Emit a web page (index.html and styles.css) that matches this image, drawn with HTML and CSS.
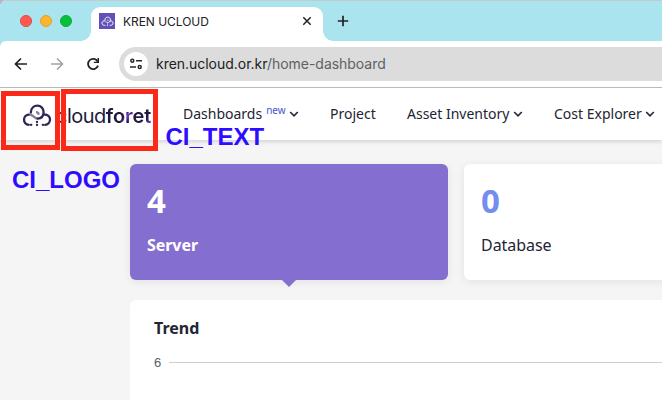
FILE: index.html
```html
<!DOCTYPE html>
<html lang="en">
<head>
<meta charset="utf-8">
<title>KREN UCLOUD</title>
<link rel="stylesheet" href="styles.css">
</head>
<body>
<svg class="symbols" aria-hidden="true">
  <symbol id="cloud" viewBox="0 0 30 24">
    <path d="M6.500 10.700C11 9.700 11.800 14.300 15.600 14.600M14 8.200c1.400 0 2.600.9 2.600 2.600" fill="none" stroke="var(--soft)" stroke-width="2.300"/>
    <path d="M6.800 20.800C.6 20.600.4 11.300 6.500 10.700M8.800 8.600C9.200-.8 21.700-.4 21.600 8.200c0 4-2.600 6.200-6 6.400M22 10.500c7.600-.5 8 9.600 1.200 10.300" fill="none" stroke="var(--ink)" stroke-width="2.300" stroke-linecap="round"/>
    <path d="M8.900 20.800h.4M20.800 20.800h.4M15 17.800v.2M15 20.900v.1" fill="none" stroke="var(--ink)" stroke-width="2.300" stroke-linecap="round"/>
  </symbol>
  <symbol id="chevron" viewBox="0 0 10 8"><path d="M1.200 2 5 5.800 8.800 2" fill="none" stroke="currentColor" stroke-width="1.600"/></symbol>
</svg>
<div class="window">
  <header class="tabstrip">
    <div class="lights"><i class="red"></i><i class="yellow"></i><i class="green"></i></div>
    <div class="tab">
      <span class="favicon"><svg viewBox="0 0 30 24"><use href="#cloud"/></svg></span>
      <span class="tab-title">KREN UCLOUD</span>
      <svg class="close" viewBox="0 0 10 10"><path d="m1.300 1.300 7.400 7.400m0-7.400L1.300 8.700" stroke="#222" stroke-width="1.500"/></svg>
    </div>
    <svg class="plus" viewBox="0 0 12 12"><path d="M6 .8v10.400M.8 6h10.400" stroke="#222" stroke-width="1.700"/></svg>
  </header>
  <div class="toolbar">
    <svg class="tool" viewBox="0 0 14 14"><path d="M13 7H2M7 1.500 1.500 7 7 12.500" fill="none" stroke="#202124" stroke-width="1.700"/></svg>
    <svg class="tool" viewBox="0 0 14 14"><path d="M1 7h11M7 1.500 12.500 7 7 12.500" fill="none" stroke="#a3a3a3" stroke-width="1.600"/></svg>
    <svg class="tool" viewBox="0 0 14 14"><path d="M11.700 4.600A5.100 5.100 0 1 0 12 8.600" fill="none" stroke="#202124" stroke-width="1.800"/><path d="M13 .9v5.200H7.800V4.700h3.700V.9z" fill="#202124"/></svg>
    <div class="address">
      <span class="site"><svg viewBox="0 0 14 12"><g fill="none" stroke="#292929" stroke-width="1.500"><circle cx="3.300" cy="2.700" r="1.500"/><path d="M7 2.700h6M1 9.100h6"/><circle cx="10.700" cy="9.100" r="1.500"/></g></svg></span>
      <span class="url">kren.ucloud.or.kr<span class="path">/home-dashboard</span></span>
    </div>
  </div>
  <nav class="nav">
    <svg class="logo" viewBox="0 0 30 24"><use href="#cloud"/></svg>
    <span class="brand">cloud<b>foret</b></span>
    <a class="item dash">Dashboards<sup>new</sup><svg><use href="#chevron"/></svg></a>
    <a class="item project">Project</a>
    <a class="item asset">Asset Inventory<svg><use href="#chevron"/></svg></a>
    <a class="item cost">Cost Explorer<svg><use href="#chevron"/></svg></a>
  </nav>
  <main class="content">
    <div class="cards">
      <section class="card active"><strong>4</strong><span>Server</span></section>
      <section class="card"><strong>0</strong><span>Database</span></section>
    </div>
    <section class="trend">
      <h2>Trend</h2>
      <div class="axis"><span>6</span><i></i></div>
    </section>
  </main>
  <div class="mark logo-box"></div>
  <div class="mark text-box"></div>
  <span class="note logo-note">CI_LOGO</span>
  <span class="note text-note">CI_TEXT</span>
</div>
</body>
</html>
```
FILE: styles.css
```css
* { box-sizing: border-box; }
body { margin: 0; overflow: hidden; background: #b9b4b8; font-family: "Noto Sans", sans-serif; color: #232533; --ink: #2f2657; --soft: #858096; }
.symbols { position: absolute; width: 0; height: 0; }
svg { display: block; flex: none; }
.window { position: relative; width: 662px; height: 400px; overflow: hidden; background: #f5f5f5; border-top-left-radius: 7px; }
.tabstrip { display: flex; height: 47px; margin-bottom: -6px; padding-left: 20px; background: #aae4ef; border-top: 1px solid #c5cacc; }
.lights { display: flex; gap: 8px; width: 71px; padding-top: 14px; }
.lights i { width: 12px; height: 12px; border-radius: 50%; border: 1px solid #e3463f; background: #ff5a52; }
.lights .yellow { background: #fdb52f; border-color: #dea134; }
.lights .green { background: #05c13c; border-color: #13a73a; }
.tab { position: relative; display: flex; align-items: center; width: 232px; height: 34px; margin-top: 6px; padding: 0 11px 6px 8px; background: #fff; border-radius: 9px 9px 0 0; }
.tab::before, .tab::after { content: ""; position: absolute; bottom: 0; width: 10px; height: 10px; }
.tab::before { left: -10px; background: radial-gradient(circle at 0 0, transparent 9.500px, #fff 10px); }
.tab::after { right: -10px; background: radial-gradient(circle at 100% 0, transparent 9.500px, #fff 10px); }
.favicon { display: grid; place-items: center; width: 16px; height: 16px; background: #6050b8; --ink: #fff; --soft: #d8d3f3; }
.favicon svg { width: 13px; height: 11px; }
.tab-title { margin-left: 8px; font: 12px Inter, sans-serif; letter-spacing: -.05px; color: #202124; }
.close { width: 10px; height: 10px; margin-left: auto; }
.plus { width: 12px; height: 12px; margin: 14px 0 0 14px; }
.toolbar { position: relative; display: flex; align-items: center; height: 47px; padding: 0 0 1px 14px; background: #fff; border-bottom: 1px solid #bdbdbd; border-top-left-radius: 6px; }
.tool { width: 14px; height: 14px; margin-right: 22px; }
.tool + .tool + .tool { margin-right: 19px; }
.address { display: flex; align-items: center; flex: 1; height: 34px; padding-left: 5px; background: #dcdcdc; border-radius: 17px 0 0 17px; }
.site { display: grid; place-items: center; width: 24px; height: 24px; border-radius: 50%; background: #fff; }
.site svg { width: 14px; height: 12px; }
.url { margin-left: 8px; font: 14px Inter, sans-serif; letter-spacing: -.03px; color: #202124; white-space: nowrap; }
.path { color: #606163; }
.nav { position: relative; display: flex; align-items: center; height: 52px; padding-left: 22px; background: #fff; box-shadow: 0 2px 4px rgba(0,0,0,.13); white-space: nowrap; }
.logo { width: 30px; height: 24px; margin-top: 3px; }
.brand { width: 96px; margin: 3px 0 0 4px; font: 400 20px/26px Inter, sans-serif; letter-spacing: -.5px; color: #211a3c; }
.brand b { font-weight: 600; letter-spacing: -.1px; background: linear-gradient(120deg, #211a3c 42%, #7639dc 48%, #211a3c 54%, #211a3c 83%, #7639dc 95%); background-clip: text; color: transparent; }
.item { display: flex; align-items: center; font-size: 14px; line-height: 20px; }
.item svg { width: 10px; height: 8px; margin-left: 4px; }
.dash { width: 147px; margin-left: 31px; }
.dash sup { margin: -9px 0 0 4px; font-size: 10px; line-height: 12px; color: #4058d0; }
.dash svg { margin-left: 3px; }
.project { width: 77px; }
.asset { width: 147px; }
.cost svg { margin-left: 3px; }
.content { padding: 24px 0 0 130px; }
.cards { display: flex; gap: 16px; }
.card { position: relative; display: flex; flex: none; flex-direction: column; width: 318px; height: 116px; padding: 14px 17px; border-radius: 6px; background: #fff; box-shadow: 0 2px 8px rgba(0,0,0,.08); }
.card strong { font-size: 33px; line-height: 46px; color: #748df0; }
.card span { margin-top: 10px; font-size: 16px; line-height: 22px; letter-spacing: -.05px; }
.active { background: #846ecf; }
.active strong, .active span { color: #fff; font-weight: 700; }
.active::after { content: ""; position: absolute; left: 152px; top: 116px; border: 7px solid transparent; border-top-color: #846ecf; border-bottom: 0; }
.trend { height: 120px; margin-top: 20px; padding: 16px 0 0 24px; border-radius: 6px 0 0; background: #fff; }
.trend h2 { margin: 0; font-size: 16px; line-height: 24px; }
.axis { display: flex; align-items: center; height: 20px; margin-top: 12px; font: 13px "Liberation Sans", sans-serif; color: #5a5d68; }
.axis i { flex: 1; height: 1px; margin-left: 8px; background: #cfcfcf; }
.mark { position: absolute; border: 5px solid #fd2918; }
.logo-box { left: 1px; top: 91px; width: 59px; height: 59px; }
.text-box { left: 61px; top: 89px; width: 97px; height: 62px; }
.note { position: absolute; font: 700 24px/28px "Liberation Sans", sans-serif; color: #2d0cff; }
.logo-note { left: 12px; top: 166px; }
.text-note { left: 165.5px; top: 123px; }
```
